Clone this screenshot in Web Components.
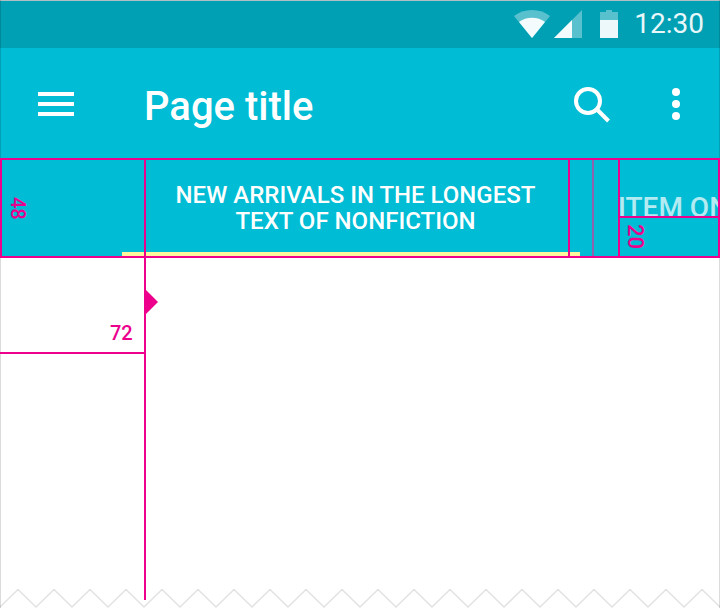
<!DOCTYPE html>
<html>
<head>
<meta charset="utf-8">
<title>Tabs spec</title>
<style>
    html, body { margin: 0; padding: 0; background: #fff; }
    body { font-family: Roboto, "Liberation Sans", sans-serif; }
</style>
</head>
<body>
<spec-frame>
    <status-bar time="12:30"></status-bar>
    <app-toolbar page-title="Page title"></app-toolbar>
    <tab-bar>
        <tab-item selected>NEW ARRIVALS IN THE LONGEST<br>TEXT OF NONFICTION</tab-item>
        <tab-item>ITEM ONE</tab-item>
    </tab-bar>
    <spec-overlay slot="overlay"></spec-overlay>
</spec-frame>
<script>
class SpecFrame extends HTMLElement {
    constructor() {
        super()
        this.attachShadow({ mode: 'open' })
    }
    connectedCallback() {
        this.shadowRoot.innerHTML = `
            <style>
                :host {
                    display: block;
                    position: relative;
                    width: 720px;
                    height: 608px;
                    overflow: hidden;
                    background: #fff;
                }
                #content {
                    display: flex;
                    flex-direction: column;
                }
                #edge {
                    position: absolute;
                    left: 0;
                    top: 0;
                    width: 718px;
                    height: 608px;
                    border: solid rgba(0, 0, 0, .14);
                    border-width: 0 1px;
                    pointer-events: none;
                }
                #tear {
                    position: absolute;
                    left: 0;
                    bottom: 0;
                }
            </style>
            <div id="content"><slot></slot></div>
            <svg id="tear" width="720" height="20" viewBox="0 0 720 20">
                <polyline fill="none" stroke="#e2e2e2" stroke-width="1.5"
                    points="${this.zigzag()}"></polyline>
            </svg>
            <div id="edge"></div>
            <slot name="overlay"></slot>
        `
    }
    zigzag() {
        let pts = []
        for (let x = 0; x <= 720; x += 18) {
            pts.push(x + ',' + (x % 36 == 0 ? 19 : 1.5))
        }
        return pts.join(' ')
    }
}
customElements.define('spec-frame', SpecFrame)

class StatusBar extends HTMLElement {
    constructor() {
        super()
        this.attachShadow({ mode: 'open' })
    }
    connectedCallback() {
        this.shadowRoot.innerHTML = `
            <style>
                :host {
                    display: flex;
                    align-items: center;
                    justify-content: flex-end;
                    height: 48px;
                    box-sizing: border-box;
                    padding-right: 16px;
                    background: #00a0b4;
                    border-top: 1px solid #b0bec5;
                    color: #e8f7f9;
                }
                svg { display: block; margin-top: -1px; }
                #wifi { margin-right: 4px; }
                #signal { margin-right: 18px; }
                #battery { margin-right: 16px; }
                #time {
                    font: 400 28px Roboto, sans-serif;
                    line-height: 48px;
                    margin-top: -1px;
                }
            </style>
            <svg id="wifi" width="36" height="28" viewBox="0 0 36 28">
                <path fill="#fff" fill-opacity=".35" d="M18 28 0 6C5 2 11 0 18 0s13 2 18 6z"></path>
                <path fill="#fff" fill-opacity=".93" d="M18 28 5 12c3.500-2.800 8-4.300 13-4.300s9.500 1.500 13 4.300z"></path>
            </svg>
            <svg id="signal" width="28" height="28" viewBox="0 0 28 28">
                <path fill="#fff" fill-opacity=".35" d="M28 0v28H0z"></path>
                <path fill="#fff" fill-opacity=".93" d="M18 10v18H0z"></path>
            </svg>
            <svg id="battery" width="18" height="28" viewBox="0 0 18 28">
                <path fill="#fff" fill-opacity=".35" d="M6 0h6v2h6v8H0V2h6z"></path>
                <rect fill="#fff" fill-opacity=".93" y="10" width="18" height="18"></rect>
            </svg>
            <span id="time">${this.getAttribute('time')}</span>
        `
    }
}
customElements.define('status-bar', StatusBar)

class AppToolbar extends HTMLElement {
    constructor() {
        super()
        this.attachShadow({ mode: 'open' })
    }
    connectedCallback() {
        this.shadowRoot.innerHTML = `
            <style>
                :host {
                    display: flex;
                    align-items: center;
                    height: 110px;
                    background: #00bcd4;
                    color: #fff;
                }
                svg { display: block; }
                #menu { margin: 2px 0 0 36px; width: 40px; }
                h1 {
                    flex: 1;
                    margin: 6px 0 0 68px;
                    font: 500 40px Roboto, sans-serif;
                }
                #search { margin: 4px 62px 0 0; }
                #more { margin: 2px 40px 0 0; }
            </style>
            <svg id="menu" width="40" height="28" viewBox="0 0 40 28">
                <path fill="#fff" d="M2 2h36v4H2zM2 12h36v4H2zM2 22h36v4H2z"></path>
            </svg>
            <h1>${this.getAttribute('page-title')}</h1>
            <svg id="search" width="36" height="36" viewBox="0 0 36 36">
                <circle cx="14" cy="14" r="12" fill="none" stroke="#fff" stroke-width="4"></circle>
                <path stroke="#fff" stroke-width="4" d="m22.500 22 12 12"></path>
            </svg>
            <svg id="more" width="8" height="32" viewBox="0 0 8 32">
                <circle cx="4" cy="4" r="4" fill="#fff"></circle>
                <circle cx="4" cy="16" r="4" fill="#fff"></circle>
                <circle cx="4" cy="28" r="4" fill="#fff"></circle>
            </svg>
        `
    }
}
customElements.define('app-toolbar', AppToolbar)

class TabBar extends HTMLElement {
    constructor() {
        super()
        this.attachShadow({ mode: 'open' })
    }
    connectedCallback() {
        this.shadowRoot.innerHTML = `
            <style>
                :host {
                    display: flex;
                    height: 100px;
                    padding-left: 122px;
                    box-sizing: border-box;
                    background: #00bcd4;
                    overflow: hidden;
                }
            </style>
            <slot></slot>
        `
    }
}
customElements.define('tab-bar', TabBar)

class TabItem extends HTMLElement {
    constructor() {
        super()
        this.attachShadow({ mode: 'open' })
    }
    connectedCallback() {
        this.shadowRoot.innerHTML = `
            <style>
                :host {
                    display: flex;
                    flex: none;
                    box-sizing: border-box;
                    height: 98px;
                    width: 458px;
                    margin-right: 38px;
                    align-items: flex-start;
                    justify-content: center;
                    text-align: center;
                    padding: 24px 0 0 9px;
                    font: 500 24px/26px Roboto, sans-serif;
                    color: #fff;
                    opacity: .7;
                    white-space: nowrap;
                }
                :host([selected]) {
                    opacity: 1;
                    border-bottom: 4px solid #fff59d;
                }
                :host(:not([selected])) {
                    justify-content: flex-start;
                    padding: 35px 0 0;
                    font-size: 28px;
                    font-weight: 500;
                    line-height: 30px;
                    width: 200px;
                    margin: 0;
                }
            </style>
            <slot></slot>
        `
    }
}
customElements.define('tab-item', TabItem)

class SpecOverlay extends HTMLElement {
    constructor() {
        super()
        this.attachShadow({ mode: 'open' })
    }
    connectedCallback() {
        // redline boxes, placed on the picture at their measured coordinates
        const lines = [
            [0, 158, 720, 2], [0, 256, 720, 2], [0, 158, 2, 100], [718, 158, 2, 100],
            [144, 158, 2, 442], [568, 158, 2, 100], [618, 158, 2, 100],
            [620, 216, 100, 2], [0, 352, 145, 2]
        ]
        this.shadowRoot.innerHTML = `
            <style>
                :host {
                    position: absolute;
                    left: 0;
                    top: 0;
                    width: 720px;
                    height: 608px;
                    pointer-events: none;
                    color: #ec008c;
                    font: 500 20px Roboto, sans-serif;
                }
                .line { position: absolute; background: #ec008c; }
                #mid {
                    position: absolute;
                    left: 592px;
                    top: 160px;
                    width: 2px;
                    height: 96px;
                    background: #8f62ae;
                }
                #pin { position: absolute; left: 146px; top: 290px; }
                .num { position: absolute; line-height: 20px; }
                #n72 { left: 110px; top: 323px; }
                .side { writing-mode: vertical-rl; }
                #n48 { left: 8px; top: 197px; }
                #n20 { left: 625px; top: 224px; font-size: 22px; }
            </style>
            ${lines.map(l => `<div class="line" style="left:${l[0]}px;top:${l[1]}px;width:${l[2]}px;height:${l[3]}px"></div>`).join('')}
            <div id="mid"></div>
            <svg id="pin" width="12" height="24" viewBox="0 0 12 24"><path fill="#ec008c" d="M0 0l12 12L0 24z"></path></svg>
            <span class="num" id="n72">72</span>
            <span class="num side" id="n48">48</span>
            <span class="num side" id="n20">20</span>
        `
    }
}
customElements.define('spec-overlay', SpecOverlay)
</script>
</body>
</html>
